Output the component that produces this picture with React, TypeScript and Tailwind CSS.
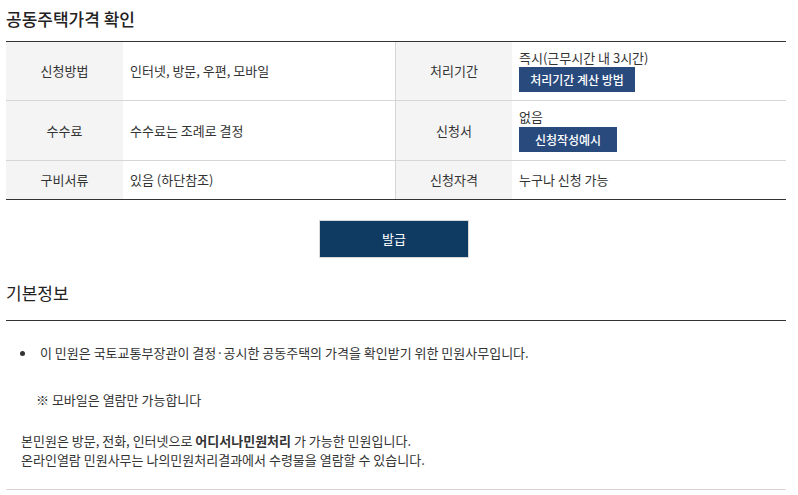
import React from "react";

const font = "font-['Noto_Sans_CJK_KR','Noto_Sans',sans-serif]";

function Th({ children, left = false }: { children: React.ReactNode; left?: boolean }) {
  return (
    <div
      className={`w-[117px] shrink-0 bg-[#f4f4f4] flex items-center justify-center text-[13px] text-[#333] ${
        left ? "border-l border-[#d6d6d6]" : ""
      }`}
    >
      {children}
    </div>
  );
}

function Btn({ children, w }: { children: React.ReactNode; w: string }) {
  return (
    <span className={`inline-flex items-center justify-center h-[25px] ${w} bg-[#294a7d] text-white text-[12px] font-medium`}>
      {children}
    </span>
  );
}

export default function App() {
  return (
    <div className={`${font} bg-white w-[798px] h-[495px] overflow-hidden text-[#333]`}>
      <div className="w-[780px] ml-[6px]">
        <h2 className="pt-[7px] h-[41px] text-[17px] leading-[24px] font-medium text-[#222]">
          공동주택가격 확인
        </h2>

        <div className="border-t border-b border-[#333]">
          <div className="flex h-[59px] border-b border-[#d6d6d6]">
            <Th>신청방법</Th>
            <div className="w-[272px] shrink-0 flex items-center pl-[7px] text-[13px]">
              인터넷, 방문, 우편, 모바일
            </div>
            <Th left>처리기간</Th>
            <div className="flex-1 flex flex-col justify-center items-start pl-[7px] text-[13px] gap-[1px]">
              <span className="leading-[16px]">즉시(근무시간 내 3시간)</span>
              <Btn w="w-[116px]">처리기간 계산 방법</Btn>
            </div>
          </div>
          <div className="flex h-[60px] border-b border-[#d6d6d6]">
            <Th>수수료</Th>
            <div className="w-[272px] shrink-0 flex items-center pl-[7px] text-[13px]">
              수수료는 조례로 결정
            </div>
            <Th left>신청서</Th>
            <div className="flex-1 flex flex-col justify-center items-start pl-[7px] text-[13px] gap-[2px]">
              <span className="leading-[16px]">없음</span>
              <Btn w="w-[98px]">신청작성예시</Btn>
            </div>
          </div>
          <div className="flex h-[38px]">
            <Th>구비서류</Th>
            <div className="w-[272px] shrink-0 flex items-center pl-[7px] text-[13px]">
              있음 (하단참조)
            </div>
            <Th left>신청자격</Th>
            <div className="flex-1 flex items-center pl-[7px] text-[13px]">누구나 신청 가능</div>
          </div>
        </div>

        <div className="flex mt-[20px] pl-[313px]">
          <button className="w-[150px] h-[38px] bg-[#0f3a62] border border-[#d9d9d9] text-white text-[13px]">
            발급
          </button>
        </div>

        <h3 className="mt-[23px] text-[17px] leading-[24px] text-[#222] pb-[15px] border-b border-[#333]">
          기본정보
        </h3>

        <div className="pt-[22px] text-[13px]">
          <div className="flex items-center leading-[20px] pl-[14px]">
            <span className="w-[5px] h-[5px] rounded-full bg-[#333] mr-[15px]" />
            <span>이 민원은 국토교통부장관이 결정·공시한 공동주택의 가격을 확인받기 위한 민원사무입니다.</span>
          </div>
          <div className="mt-[27px] leading-[20px] pl-[30px]">※ 모바일은 열람만 가능합니다</div>
          <div className="mt-[21px] pl-[15px] leading-[19px]">
            <div>
              본민원은 방문, 전화, 인터넷으로 <b className="font-bold">어디서나민원처리</b> 가 가능한 민원입니다.
            </div>
            <div>온라인열람 민원사무는 나의민원처리결과에서 수령물을 열람할 수 있습니다.</div>
          </div>
          <div className="mt-[20px] border-b border-[#d6d6d6]" />
        </div>
      </div>
    </div>
  );
}
